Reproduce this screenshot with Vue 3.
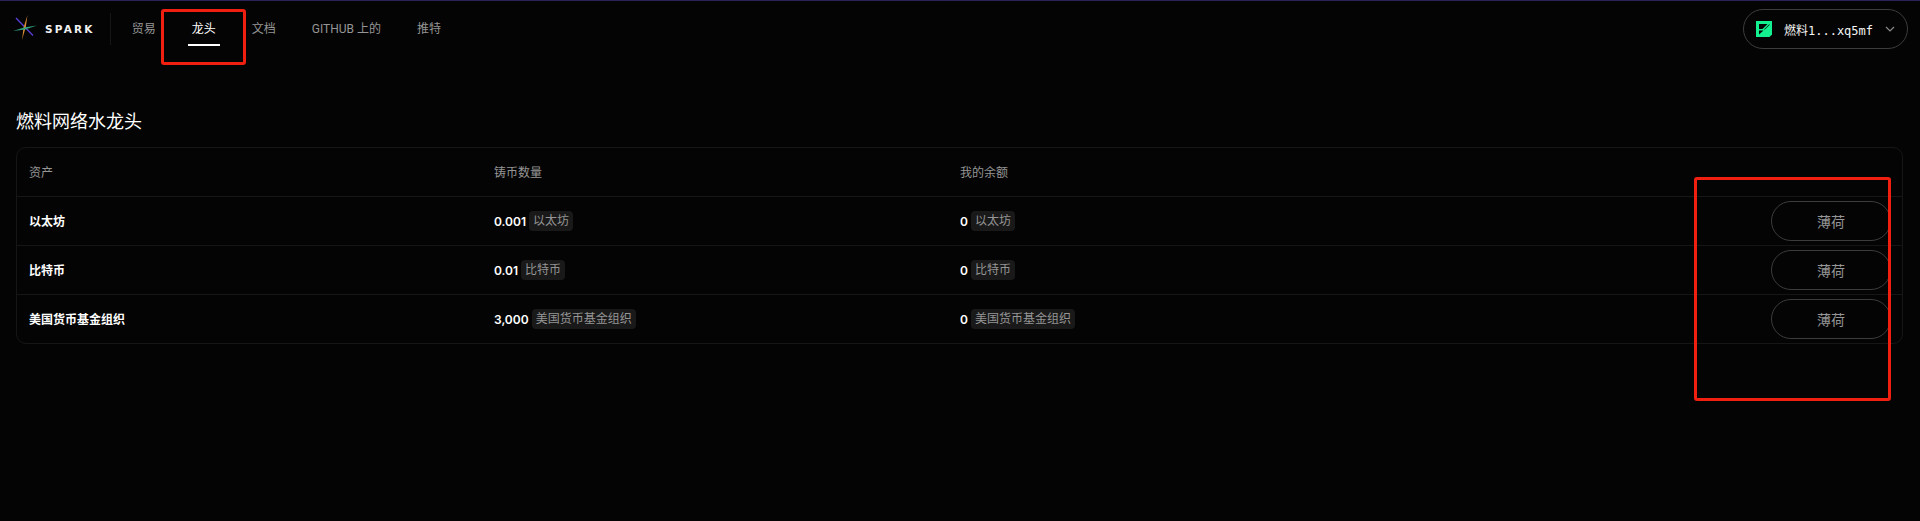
<script setup>
const links = [
  { label: '贸易' },
  { label: '龙头', active: true },
  { label: '文档' },
  { label: 'GITHUB 上的' },
  { label: '推特' }
]

const assets = [
  { name: '以太坊', amount: '0.001' },
  { name: '比特币', amount: '0.01' },
  { name: '美国货币基金组织', amount: '3,000' }
]
</script>

<template>
  <div class="page">
    <header class="topbar">
      <div class="brand">
        <svg class="logo" width="24" height="28" viewBox="0 0 24 28" fill="none">
          <path d="M3 3L20 20.5" stroke="#5b3fd6" stroke-width="1.3" />
          <path d="M14.5 0 L12.8 12 L9 25 L10.6 12.5 Z" fill="#d98a35" />
          <path d="M0 16 L11 12.4 L24 10.5 L12 14.4 Z" fill="#2fa37c" />
        </svg>
        <span class="wordmark">SPARK</span>
      </div>
      <div class="divider"></div>
      <nav class="nav">
        <a v-for="link in links" :key="link.label" :class="{ active: link.active }">{{ link.label }}</a>
      </nav>
      <button class="wallet" type="button">
        <svg width="16" height="16" viewBox="0 0 16 16">
          <path d="M0 0H16V13.5L13.5 16H0Z" fill="#12f08f" />
          <path d="M3 3H11.5L6.5 8H3Z M3 9.5H7.5L3 13.5Z M8 8.5L13.5 3V4L8.8 8.5Z" fill="#050505" />
        </svg>
        <span class="address">燃料1...xq5mf</span>
        <svg class="chevron" width="10" height="6" viewBox="0 0 10 6" fill="none">
          <path d="M1 1L5 5L9 1" stroke="#8a8a8a" stroke-width="1.2" />
        </svg>
      </button>
    </header>

    <main class="content">
      <h1>燃料网络水龙头</h1>
      <section class="card">
        <div class="row head">
          <span>资产</span>
          <span>铸币数量</span>
          <span>我的余额</span>
          <span></span>
        </div>
        <div v-for="asset in assets" :key="asset.name" class="row">
          <span class="asset">{{ asset.name }}</span>
          <span class="value">
            <b>{{ asset.amount }}</b>
            <em>{{ asset.name }}</em>
          </span>
          <span class="value">
            <b>0</b>
            <em>{{ asset.name }}</em>
          </span>
          <span class="action">
            <button type="button" class="mint">薄荷</button>
          </span>
        </div>
      </section>
    </main>

    <div class="mark mark-nav"></div>
    <div class="mark mark-mint"></div>
  </div>
</template>

<style>
html,
body {
  background: #040404;
}
</style>

<style scoped>
.page {
  position: relative;
  height: 521px;
  overflow: hidden;
  background: #040404;
  border-top: 1px solid #2a2358;
  box-sizing: border-box;
  font-family: Inter, "Noto Sans CJK SC", sans-serif;
  font-size: 12px;
  color: #fff;
}

.topbar {
  display: flex;
  align-items: center;
  height: 56px;
  padding: 0 12px 0 13px;
}

.brand {
  display: flex;
  align-items: center;
  gap: 8px;
}

.wordmark {
  font-family: "DejaVu Sans", sans-serif;
  font-size: 10.5px;
  font-weight: 700;
  letter-spacing: 2.2px;
  color: #f2f2f2;
}

.divider {
  width: 1px;
  height: 32px;
  margin: 0 21px 0 15px;
  background: #161616;
}

.nav {
  display: flex;
  gap: 36px;
  flex: 1;
  color: #959595;
  font-family: Roboto, "Noto Sans CJK SC", sans-serif;
}

.nav a {
  position: relative;
  line-height: 16px;
}

.nav a.active {
  color: #fff;
}

.nav a.active::after {
  content: '';
  position: absolute;
  left: -4px;
  right: -4px;
  bottom: -9px;
  height: 2px;
  background: #fff;
}

.wallet {
  display: flex;
  align-items: center;
  height: 40px;
  width: 165px;
  padding: 0 12px;
  box-sizing: border-box;
  border: 1px solid #3c3c3c;
  border-radius: 20px;
  background: transparent;
}

.address {
  margin-left: 12px;
  font-family: "DejaVu Sans Mono", "Noto Sans CJK SC", monospace;
  font-size: 12px;
  color: #f4f4f4;
  white-space: nowrap;
}

.chevron {
  margin-left: auto;
}

.content {
  padding: 0 17px 0 16px;
}

h1 {
  margin: 0;
  padding-top: 53px;
  height: 37px;
  font-size: 18px;
  line-height: 24px;
  font-weight: 400;
}

.card {
  border: 1px solid #161616;
  border-radius: 10px;
}

.row {
  display: grid;
  grid-template-columns: 465px 466px 1fr 131px;
  align-items: center;
  height: 49px;
  box-sizing: border-box;
  padding-left: 12px;
  border-top: 1px solid #161616;
}

.head {
  height: 48px;
  border-top: 0;
  color: #959595;
}

.head span,
.asset {
  padding-bottom: 2px;
}

.asset {
  font-weight: 600;
}

.value {
  display: flex;
  align-items: center;
  gap: 3px;
}

.value b {
  font-weight: 600;
}

.value em {
  padding: 0 4px;
  line-height: 20px;
  border-radius: 4px;
  background: #191919;
  color: #959595;
  font-style: normal;
}

.action {
  display: flex;
}

.mint {
  width: 120px;
  height: 40px;
  border: 1px solid #3c3c3c;
  border-radius: 20px;
  background: transparent;
  color: #959595;
  font-family: inherit;
  font-size: 14px;
}

.mark {
  position: absolute;
  box-sizing: border-box;
  border: 3px solid #f01f10;
  border-radius: 3px;
}

.mark-nav {
  left: 161px;
  top: 8px;
  width: 85px;
  height: 56px;
}

.mark-mint {
  left: 1694px;
  top: 176px;
  width: 197px;
  height: 224px;
}
</style>
